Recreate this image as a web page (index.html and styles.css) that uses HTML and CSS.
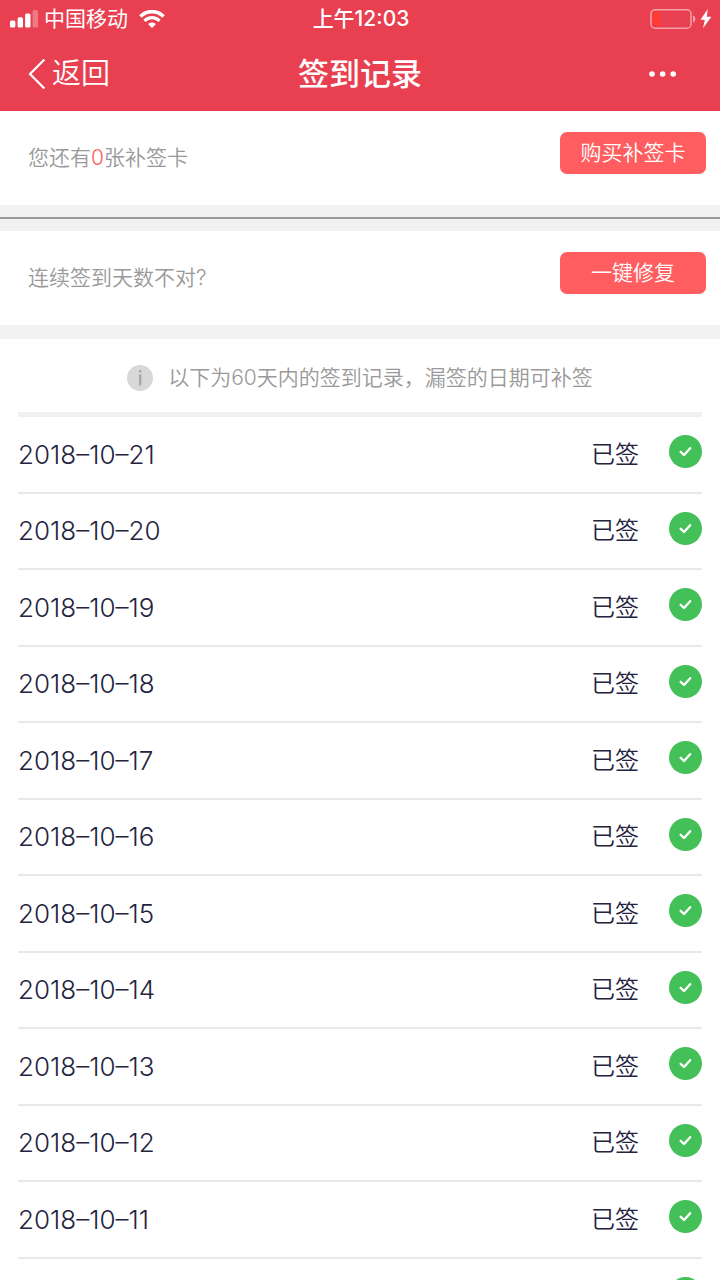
FILE: index.html
```
<!DOCTYPE html>
<html lang="zh-CN">
<head>
<meta charset="utf-8">
<meta name="viewport" content="width=device-width, initial-scale=1">
<title>签到记录</title>
<link rel="stylesheet" href="styles.css">
</head>
<body>
<svg class="defs" aria-hidden="true">
  <symbol id="check" viewBox="0 0 34 34">
    <circle cx="17" cy="17" r="17" fill="#43c057"/>
    <path d="M12 17.3l3.5 3.3 6.3-7" fill="none" stroke="#fff" stroke-width="2.4" stroke-linecap="round" stroke-linejoin="round"/>
  </symbol>
</svg>
<div class="page">
  <header class="header">
    <div class="status">
      <div class="status-left">
        <svg class="signal" viewBox="0 0 28 18" aria-hidden="true">
          <rect x="0" y="10.5" width="5.4" height="7" rx="1.6"/>
          <rect x="7.6" y="7.2" width="5.4" height="10.3" rx="1.6"/>
          <rect x="15.1" y="3.5" width="5.4" height="14" rx="1.6"/>
          <rect x="22.6" y="0" width="5.4" height="17.5" rx="1.6" opacity=".3"/>
        </svg>
        <span class="carrier">中国移动</span>
        <svg class="wifi" viewBox="0 0 26 18" aria-hidden="true">
          <path d="M1.4 6.4a16.4 16.4 0 0 1 23.2 0" fill="none" stroke="#fff" stroke-width="3.6"/>
          <path d="M5.5 10.8a10.6 10.6 0 0 1 15 0" fill="none" stroke="#fff" stroke-width="3.2"/>
          <path d="M9 14a5.8 5.8 0 0 1 8 0l-4 4z"/>
        </svg>
      </div>
      <span class="time">上午12:03</span>
      <div class="status-right">
        <svg class="battery" viewBox="0 0 46 20" aria-hidden="true">
          <rect x="1" y=".8" width="40" height="18.4" rx="4" fill="none" stroke="#fff" stroke-opacity=".5" stroke-width="1.5"/>
          <path d="M43 6.3q2.4 1.2 2.4 3.7T43 13.7z" opacity=".5"/>
          <path d="M5 3h4.8v14H5q-2 0-2-2V5q0-2 2-2z" fill="#ff3b30"/>
        </svg>
        <svg class="bolt" viewBox="0 0 12 20" aria-hidden="true"><path d="M7.8 0L.5 10.7h4.3L3 19.3 11.4 7.8H6.8z"/></svg>
      </div>
    </div>
    <nav class="nav">
      <button class="back" type="button">
        <svg class="chevron" viewBox="0 0 18 32" aria-hidden="true"><path d="M16.4 1.5L2 16l14.4 14.5" fill="none" stroke="#fff" stroke-width="2.2"/></svg>
        <span>返回</span>
      </button>
      <h1 class="title">签到记录</h1>
      <button class="more" type="button" aria-label="更多">
        <svg class="dots" viewBox="0 0 28 6" aria-hidden="true"><circle cx="3" cy="3" r="2.8"/><circle cx="13.6" cy="3" r="2.8"/><circle cx="24.2" cy="3" r="2.8"/></svg>
      </button>
    </nav>
  </header>
  <main class="main">
    <section class="panel">
      <p class="panel-text">您还有<span class="count">0</span>张补签卡</p>
      <button class="action" type="button">购买补签卡</button>
    </section>
    <hr class="divider">
    <section class="panel">
      <p class="panel-text">连续签到天数不对?</p>
      <button class="action" type="button">一键修复</button>
    </section>
    <section class="records">
      <p class="notice">
        <svg class="info" viewBox="0 0 26 26" aria-hidden="true"><circle cx="13" cy="13" r="13" fill="#d8d8d8"/><path d="M12 5h2.4v2.4H12zM12 9.6h2.4v11H12z" fill="#a8a8a8"/></svg>
        <span>以下为60天内的签到记录，漏签的日期可补签</span>
      </p>
      <ul class="list">
        <li class="row"><time class="date">2018–10–21</time><span class="state">已签</span><svg class="check"><use href="#check"/></svg></li>
        <li class="row"><time class="date">2018–10–20</time><span class="state">已签</span><svg class="check"><use href="#check"/></svg></li>
        <li class="row"><time class="date">2018–10–19</time><span class="state">已签</span><svg class="check"><use href="#check"/></svg></li>
        <li class="row"><time class="date">2018–10–18</time><span class="state">已签</span><svg class="check"><use href="#check"/></svg></li>
        <li class="row"><time class="date">2018–10–17</time><span class="state">已签</span><svg class="check"><use href="#check"/></svg></li>
        <li class="row"><time class="date">2018–10–16</time><span class="state">已签</span><svg class="check"><use href="#check"/></svg></li>
        <li class="row"><time class="date">2018–10–15</time><span class="state">已签</span><svg class="check"><use href="#check"/></svg></li>
        <li class="row"><time class="date">2018–10–14</time><span class="state">已签</span><svg class="check"><use href="#check"/></svg></li>
        <li class="row"><time class="date">2018–10–13</time><span class="state">已签</span><svg class="check"><use href="#check"/></svg></li>
        <li class="row"><time class="date">2018–10–12</time><span class="state">已签</span><svg class="check"><use href="#check"/></svg></li>
        <li class="row"><time class="date">2018–10–11</time><span class="state">已签</span><svg class="check"><use href="#check"/></svg></li>
        <li class="row"><span class="date"></span><svg class="check"><use href="#check"/></svg></li>
      </ul>
    </section>
  </main>
</div>
</body>
</html>
```
FILE: styles.css
```
* { box-sizing: border-box; }
body {
  margin: 0;
  background: #fff;
  font-family: Inter, "Noto Sans CJK SC", sans-serif;
  font-weight: 350;
}
h1, p, ul { margin: 0; padding: 0; }
button {
  border: 0;
  padding: 0;
  background: none;
  color: inherit;
  font: inherit;
  cursor: pointer;
}
svg { display: block; flex: none; fill: #fff; }
.defs { position: absolute; width: 0; height: 0; }
.page { display: flex; flex-direction: column; height: 100vh; overflow: hidden; }

.header { flex: none; background: #e84051; color: #fff; }
.status, .nav {
  display: grid;
  grid-template-columns: 1fr auto 1fr;
  align-items: center;
}
.status { height: 37px; padding: 0 8px 0 10px; font-size: 21px; line-height: 36px; }
.status-left { display: flex; align-items: center; }
.signal { width: 28px; height: 18px; }
.carrier { margin: 0 11px 0 6px; font-weight: 400; }
.wifi { width: 26px; height: 18px; }
.time { font-size: 21px; font-weight: 500; }
.status-right { display: flex; align-items: center; justify-content: flex-end; gap: 4px; }
.battery { width: 46px; height: 20px; }
.bolt { width: 12px; height: 20px; }
.nav { height: 74px; padding: 0 28px; }
.back { display: flex; align-items: center; gap: 6px; justify-self: start; font-size: 29px; line-height: 42px; }
.chevron { width: 18px; height: 32px; }
.title { font-size: 31px; font-weight: 500; line-height: 46px; }
.more { justify-self: end; padding: 16px 15px; }
.dots { width: 28px; height: 6px; }

.main { flex: 1; min-height: 0; }
.panel {
  display: flex;
  justify-content: space-between;
  align-items: flex-start;
  height: 94px;
  padding: 21px 14px 0 28px;
}
.panel-text { padding-top: 10px; color: #999; font-size: 21px; line-height: 32px; }
.count { color: #ff5d60; }
.action {
  width: 146px;
  height: 42px;
  border-radius: 7px;
  background: #ff5d60;
  color: #fff;
  font-size: 21px;
  line-height: 40px;
}
.divider {
  height: 26px;
  margin: 0;
  border: 0;
  background: linear-gradient(#999, #999) 0 12px / 100% 2px no-repeat #f2f2f2;
}
.records { border-top: 14px solid #f2f2f2; padding: 0 18px; }
.notice {
  display: flex;
  align-items: center;
  justify-content: center;
  gap: 15px;
  height: 73px;
  padding-top: 5px;
  color: #999;
  font-size: 21px;
  line-height: 32px;
}
.info { width: 26px; height: 26px; }
.list {
  list-style: none;
  border-top: 5px solid #f0f0f0;
  color: #24243e;
}
.row {
  display: flex;
  align-items: center;
  height: 77px;
  border-bottom: 2px solid #e8e8e8;
}
.row:nth-child(even) { height: 76px; }
.date { flex: 1; font-size: 26px; line-height: 32px; }
.state { margin-right: 30px; font-size: 24px; line-height: 32px; }
.check { width: 33px; height: 33px; margin-bottom: 6px; }
```
